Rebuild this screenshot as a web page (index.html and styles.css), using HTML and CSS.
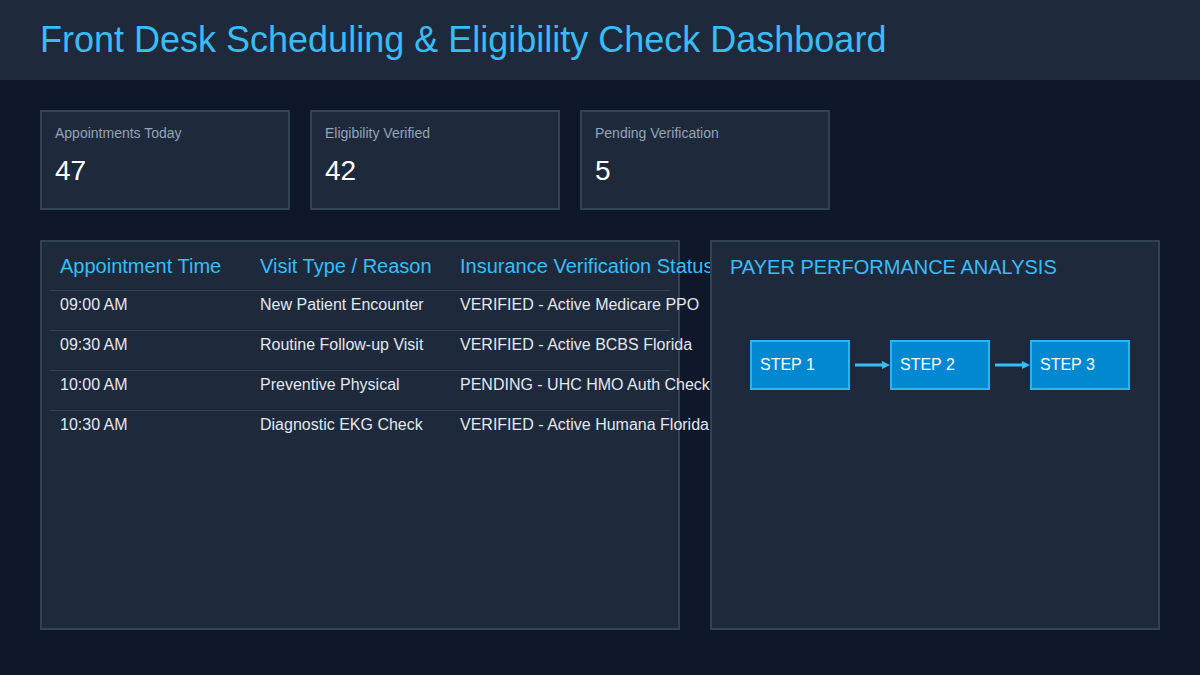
FILE: index.html
```html
<!DOCTYPE html>
<html lang="en">

<head>
    <meta charset="UTF-8">
    <title>Front Desk Scheduling &amp; Eligibility Check Dashboard</title>
    <link rel="stylesheet" href="styles.css">
</head>

<body>
    <header class="top-bar">
        <h1>Front Desk Scheduling &amp; Eligibility Check Dashboard</h1>
    </header>

    <main class="content">
        <section class="stats">
            <div class="stat-card">
                <div class="stat-label">Appointments Today</div>
                <div class="stat-value">47</div>
            </div>
            <div class="stat-card">
                <div class="stat-label">Eligibility Verified</div>
                <div class="stat-value">42</div>
            </div>
            <div class="stat-card">
                <div class="stat-label">Pending Verification</div>
                <div class="stat-value">5</div>
            </div>
        </section>

        <section class="panels">
            <div class="panel schedule-panel">
                <table class="schedule">
                    <thead>
                        <tr>
                            <th class="col-time">Appointment Time</th>
                            <th class="col-visit">Visit Type / Reason</th>
                            <th>Insurance Verification Status</th>
                        </tr>
                    </thead>
                    <tbody>
                        <tr>
                            <td>09:00 AM</td>
                            <td>New Patient Encounter</td>
                            <td>VERIFIED - Active Medicare PPO</td>
                        </tr>
                        <tr>
                            <td>09:30 AM</td>
                            <td>Routine Follow-up Visit</td>
                            <td>VERIFIED - Active BCBS Florida</td>
                        </tr>
                        <tr>
                            <td>10:00 AM</td>
                            <td>Preventive Physical</td>
                            <td>PENDING - UHC HMO Auth Check</td>
                        </tr>
                        <tr>
                            <td>10:30 AM</td>
                            <td>Diagnostic EKG Check</td>
                            <td>VERIFIED - Active Humana Florida</td>
                        </tr>
                    </tbody>
                </table>
            </div>

            <div class="panel payer-panel">
                <h2 class="panel-title">PAYER PERFORMANCE ANALYSIS</h2>
                <div class="flow">
                    <div class="step">STEP 1</div>
                    <svg class="arrow" width="40" height="12" viewBox="0 0 40 12">
                        <line x1="5" y1="6" x2="34" y2="6" stroke="#38bdf8" stroke-width="3" />
                        <polygon points="32,2 40,6 32,10" fill="#38bdf8" />
                    </svg>
                    <div class="step">STEP 2</div>
                    <svg class="arrow" width="40" height="12" viewBox="0 0 40 12">
                        <line x1="5" y1="6" x2="34" y2="6" stroke="#38bdf8" stroke-width="3" />
                        <polygon points="32,2 40,6 32,10" fill="#38bdf8" />
                    </svg>
                    <div class="step">STEP 3</div>
                </div>
            </div>
        </section>
    </main>
</body>

</html>
```

FILE: styles.css
```css
body {
    margin: 0;
    background-color: #0f172a;
    color: #e2e8f0;
    font-family: "Liberation Sans", Arial, sans-serif;
}

.top-bar {
    height: 80px;
    background-color: #1e293b;
    padding: 0 40px;
    display: flex;
    align-items: center;
}

.top-bar h1 {
    margin: 0;
    font-size: 36px;
    font-weight: normal;
    color: #38bdf8;
}

.content {
    padding: 30px 40px;
}

/* summary cards */
.stats {
    display: flex;
    gap: 20px;
}

.stat-card {
    width: 250px;
    height: 100px;
    box-sizing: border-box;
    padding: 13px;
    background-color: #1e293b;
    border: 2px solid #334155;
}

.stat-label {
    font-size: 14px;
    color: #94a3b8;
}

.stat-value {
    margin-top: 14px;
    font-size: 28px;
    color: #fff;
}

/* lower panels */
.panels {
    display: flex;
    gap: 30px;
    margin-top: 30px;
}

.panel {
    height: 390px;
    box-sizing: border-box;
    background-color: #1e293b;
    border: 2px solid #334155;
}

.schedule-panel {
    width: 640px;
    padding: 8px;
}

.payer-panel {
    width: 450px;
    padding: 8px 18px;
}

.schedule {
    width: 100%;
    border-collapse: collapse;
    table-layout: fixed;
    white-space: nowrap;
}

.schedule th,
.schedule td {
    text-align: left;
    padding: 0 10px;
    overflow: visible;
}

.schedule th {
    height: 40px;
    padding-bottom: 6px;
    box-sizing: border-box;
    font-size: 20px;
    font-weight: normal;
    color: #38bdf8;
}

.col-time,
.col-visit {
    width: 200px;
}

.schedule td {
    height: 40px;
    font-size: 16px;
    color: #e2e8f0;
    border-top: 1px solid #334155;
    vertical-align: top;
    padding-top: 5px;
    box-sizing: border-box;
}

.panel-title {
    margin: 0;
    height: 40px;
    line-height: 34px;
    font-size: 20px;
    font-weight: normal;
    color: #38bdf8;
}

.flow {
    display: flex;
    align-items: center;
    margin-top: 50px;
    margin-left: 20px;
}

.step {
    width: 100px;
    height: 50px;
    box-sizing: border-box;
    padding-left: 8px;
    display: flex;
    align-items: center;
    background-color: #0288d1;
    border: 2px solid #29b6f6;
    color: #fff;
    font-size: 16px;
}

.arrow {
    display: block;
}
```
